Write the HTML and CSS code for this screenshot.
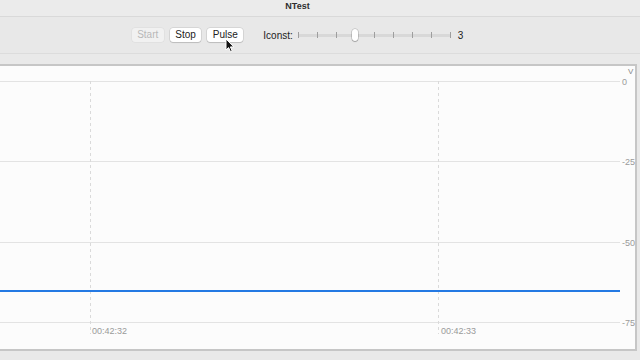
FILE: index.html
```html
<!DOCTYPE html>
<html lang="en">
<head>
    <meta charset="UTF-8">
    <title>NTest</title>
    <link rel="stylesheet" href="styles.css">
</head>
<body>
    <div class="window">
        <div class="title-bar">NTest</div>

        <div class="toolbar">
            <button class="btn" disabled>Start</button>
            <button class="btn">Stop</button>
            <button class="btn">Pulse</button>
            <span class="label">Iconst:</span>
            <div class="slider">
                <div class="track"></div>
                <div class="ticks">
                    <i></i><i></i><i></i><i></i><i></i><i></i><i></i><i></i><i></i>
                </div>
                <div class="thumb" style="left: 57px"></div>
            </div>
            <span class="value">3</span>
        </div>

        <!-- Plot area -->
        <div class="chart-frame">
            <svg class="plot" width="672" height="283" viewBox="1 0 672 283">
                <g class="grid">
                    <line x1="0" y1="15.5" x2="658" y2="15.5"/>
                    <line x1="0" y1="95.5" x2="658" y2="95.5"/>
                    <line x1="0" y1="176.5" x2="658" y2="176.5"/>
                    <line x1="0" y1="256.5" x2="658" y2="256.5"/>
                </g>
                <g class="grid-v">
                    <line x1="128.5" y1="15" x2="128.5" y2="268"/>
                    <line x1="476.5" y1="15" x2="476.5" y2="268"/>
                </g>
                <g class="axis-text">
                    <text x="660" y="19">0</text>
                    <text x="660" y="99">-25</text>
                    <text x="660" y="180">-50</text>
                    <text x="660" y="260">-75</text>
                    <text x="130" y="268">00:42:32</text>
                    <text x="479" y="268">00:42:33</text>
                    <text class="unit" x="666" y="8">V</text>
                </g>
                <line class="trace" x1="0" y1="225" x2="658" y2="225"/>
            </svg>
        </div>
    </div>

    <svg class="cursor" width="10" height="15" viewBox="0 0 10 15">
        <path d="M1 1 L1 12 L3.6 9.6 L5.5 13.8 L7.2 13 L5.4 8.9 L8.8 8.9 Z" fill="#111" stroke="#fff" stroke-width="1"/>
    </svg>
</body>
</html>
```

FILE: styles.css
```css
body {
    margin: 0;
    width: 640px;
    height: 360px;
    overflow: hidden;
    background: #e9e9e9;
    font-family: "Liberation Sans", Arial, sans-serif;
    position: relative;
}

.window {
    width: 685px;
    margin-left: -45px;
}

.title-bar {
    height: 16px;
    line-height: 13px;
    text-align: center;
    font-size: 9px;
    font-weight: bold;
    color: #2e2e2e;
    background: #ebebeb;
    border-bottom: 1px solid #d9d9d9;
}

.toolbar {
    height: 36px;
    display: flex;
    align-items: center;
    justify-content: center;
    background: #e8e8e8;
    border-bottom: 1px solid #dcdcdc;
    font-size: 10px;
    color: #222;
}

.btn {
    font-family: inherit;
    font-size: 10px;
    height: 14px;
    padding: 0 5.5px;
    margin-right: 6px;
    border: none;
    border-radius: 3px;
    background: #fff;
    color: #222;
    box-shadow: 0 0 0 0.5px rgba(0,0,0,0.15), 0 1px 1px rgba(0,0,0,0.12);
    line-height: 14px;
}

.btn:disabled {
    background: #f1f1f1;
    color: #b8b8b8;
    box-shadow: 0 0 0 0.5px rgba(0,0,0,0.06);
}

.label {
    margin-left: 14px;
}

.slider {
    position: relative;
    width: 153px;
    height: 14px;
    margin: 0 6px 0 5px;
    display: flex;
    align-items: center;
}

.track {
    width: 100%;
    height: 3px;
    background: #d8d8d8;
    border-radius: 2px;
}

.ticks {
    position: absolute;
    left: 0;
    right: 0;
    top: 4px;
    display: flex;
    justify-content: space-between;
}

.ticks i {
    display: block;
    width: 1px;
    height: 6px;
    background: #9e9e9e;
}

.thumb {
    position: absolute;
    top: 1px;
    width: 6px;
    height: 12px;
    margin-left: -3px;
    border-radius: 3px;
    background: #fff;
    box-shadow: 0 0 0 0.5px rgba(0,0,0,0.25), 0 1px 1px rgba(0,0,0,0.2);
}

.value {
    margin-left: 1px;
}

.chart-frame {
    margin: 10px 3px 0 6px;
    border: 2px solid #c6c6c6;
    background: #fcfcfc;
}

.plot {
    display: block;
}

.grid line {
    stroke: #e3e3e3;
    stroke-width: 1;
}

.grid-v line {
    stroke: #dadada;
    stroke-width: 1;
    stroke-dasharray: 3 3;
}

.axis-text text {
    font-family: "Liberation Sans", Arial, sans-serif;
    font-size: 9px;
    fill: #9a9a9a;
}

.axis-text .unit {
    font-size: 8px;
    fill: #888;
}

.trace {
    stroke: #2479e3;
    stroke-width: 2;
}

.cursor {
    position: absolute;
    left: 225px;
    top: 38px;
}
```
